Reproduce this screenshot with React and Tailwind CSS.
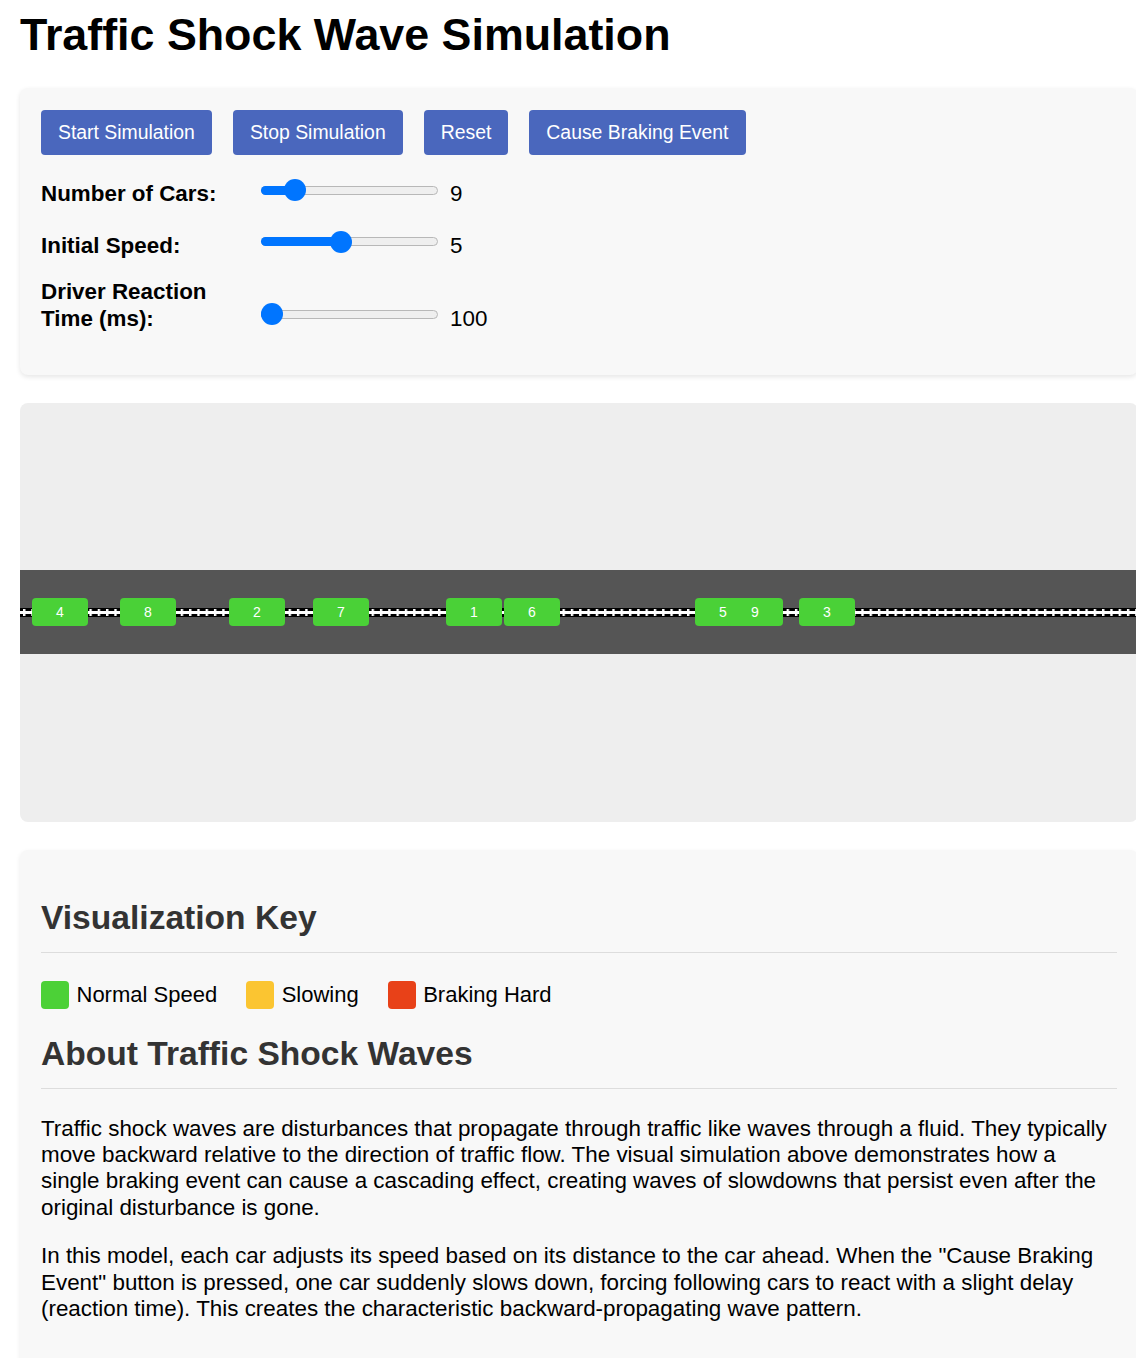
import React from "react";

const cars = [
  { n: 4, x: 12 },
  { n: 8, x: 100 },
  { n: 2, x: 209 },
  { n: 7, x: 293 },
  { n: 1, x: 426 },
  { n: 6, x: 484 },
  { n: 5, x: 675 },
  { n: 9, x: 707 },
  { n: 3, x: 779 },
];

function Slider({ frac }) {
  const w = 177;
  const center = 11 + frac * (w - 22);
  return (
    <div className="relative w-[177px] h-[22px] shrink-0 mb-[6.6px]">
      <div className="absolute left-0 right-0 top-[6.5px] h-[9px] rounded-full bg-[#efefef] border border-[#b8b8b8]" />
      <div
        className="absolute left-0 top-[6.5px] h-[9px] rounded-l-full bg-[#0075ff]"
        style={{ width: center }}
      />
      <div
        className="absolute top-0 w-[22px] h-[22px] rounded-full bg-[#0075ff]"
        style={{ left: center - 11 }}
      />
    </div>
  );
}

function Row({ label, frac, value, className }) {
  return (
    <div className={"flex items-end " + className}>
      <div className="w-[200px] mr-[20px] shrink-0 text-[22.4px] leading-[26.4px] font-bold text-black">
        {label}
      </div>
      <Slider frac={frac} />
      <div className="ml-[12px] text-[22.4px] leading-[26.4px] text-black">{value}</div>
    </div>
  );
}

function Btn({ children }) {
  return (
    <button className="h-[45px] px-[17px] rounded-[4px] bg-[#4a67bd] text-white text-[19.4px] leading-none">
      {children}
    </button>
  );
}

function LaneMarking() {
  return (
    <svg className="absolute left-0 top-[37.5px] w-full h-[9px]" preserveAspectRatio="none">
      <defs>
        <pattern id="lane" x="3" y="0" width="8.3" height="9" patternUnits="userSpaceOnUse">
          <rect x="0" y="0" width="8.3" height="9" fill="#000" />
          <rect x="0" y="3" width="8.3" height="3" fill="#fff" />
          <rect x="0" y="1" width="2.4" height="7" fill="#fff" />
        </pattern>
      </defs>
      <rect x="0" y="0" width="100%" height="9" fill="url(#lane)" />
    </svg>
  );
}

function Legend({ color, label }) {
  return (
    <div className="flex items-center gap-[7.5px] mr-[29px]">
      <div className={"w-[28px] h-[28px] rounded-[4px] " + color} />
      <span className="text-[22px] leading-[26.4px] text-black">{label}</span>
    </div>
  );
}

export default function App() {
  return (
    <div className="w-[1136px] h-[1358px] overflow-hidden bg-white pl-[20px] font-['Liberation_Sans',Arial,sans-serif]">
      <h1 className="mt-[9px] text-[44.8px] leading-[50px] font-bold text-black whitespace-nowrap">
        Traffic Shock Wave Simulation
      </h1>

      <div className="mt-[29px] w-[1118px] rounded-lg bg-[#f8f8f8] shadow-[0_2px_5px_rgba(0,0,0,0.1)] pl-[21px] pt-[22px] pb-[43px]">
        <div className="flex gap-[21px]">
          <Btn>Start Simulation</Btn>
          <Btn>Stop Simulation</Btn>
          <Btn>Reset</Btn>
          <Btn>Cause Braking Event</Btn>
        </div>
        <Row className="mt-[24px]" label="Number of Cars:" frac={0.15} value="9" />
        <Row className="mt-[23.4px]" label="Initial Speed:" frac={0.445} value="5" />
        <Row className="mt-[19.6px]" label="Driver Reaction Time (ms):" frac={0} value="100" />
      </div>

      <div className="mt-[28px] w-[1118px] h-[419px] rounded-lg bg-[#eeeeee] flex items-center">
        <div className="relative w-full h-[84px] bg-[#555555]">
          <LaneMarking />
          {cars.map((c) => (
            <div
              key={c.n}
              className="absolute top-[28px] w-[56px] h-[28px] rounded-[4px] bg-[#4ad137] text-white text-[14px] flex items-center justify-center"
              style={{ left: c.x }}
            >
              {c.n}
            </div>
          ))}
        </div>
      </div>

      <div className="mt-[28px] w-[1118px] rounded-lg bg-[#f8f8f8] shadow-[0_2px_5px_rgba(0,0,0,0.08)] px-[21px] pt-[21px] pb-[60px]">
        <h2 className="mt-[27.4px] text-[33.6px] leading-[39.6px] font-bold text-[#333] pb-[14px] border-b border-[#dddddd]">
          Visualization Key
        </h2>
        <div className="mt-[28px] flex items-center">
          <Legend color="bg-[#4cd137]" label="Normal Speed" />
          <Legend color="bg-[#fbc531]" label="Slowing" />
          <Legend color="bg-[#e84118]" label="Braking Hard" />
        </div>
        <h2 className="mt-[25px] text-[33.6px] leading-[39.6px] font-bold text-[#333] pb-[14px] border-b border-[#dddddd]">
          About Traffic Shock Waves
        </h2>
        <p className="mt-[27px] text-[22.4px] leading-[26.4px] text-black">
          Traffic shock waves are disturbances that propagate through traffic like waves through a fluid. They typically move backward relative to the direction of traffic flow. The visual simulation above demonstrates how a single braking event can cause a cascading effect, creating waves of slowdowns that persist even after the original disturbance is gone.
        </p>
        <p className="mt-[22px] text-[22.4px] leading-[26.4px] text-black">
          In this model, each car adjusts its speed based on its distance to the car ahead. When the "Cause Braking Event" button is pressed, one car suddenly slows down, forcing following cars to react with a slight delay (reaction time). This creates the characteristic backward-propagating wave pattern.
        </p>
      </div>
    </div>
  );
}
